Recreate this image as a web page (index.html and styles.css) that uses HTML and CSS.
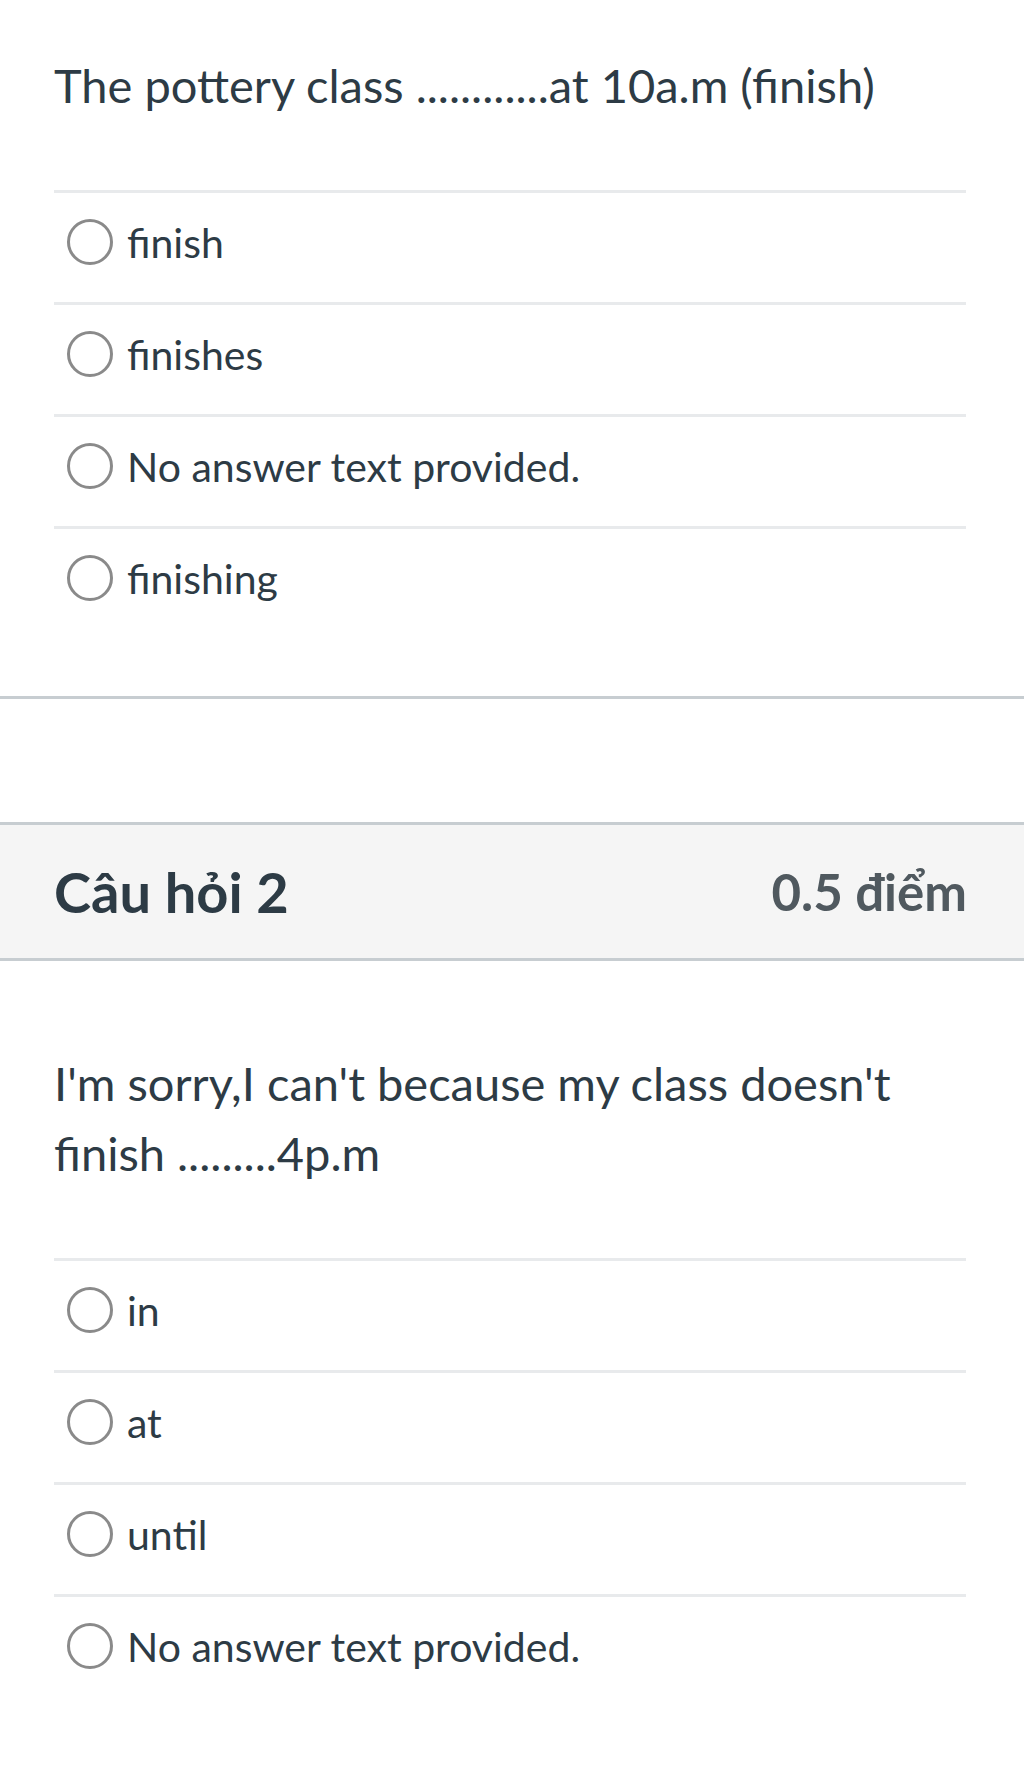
FILE: index.html
```html
<!DOCTYPE html>
<html lang="vi">
<head>
<meta charset="utf-8">
<title>Quiz</title>
<link rel="stylesheet" href="styles.css">
</head>
<body>
<div class="question">
  <div class="q-body">
    <div class="q-text">The pottery class ............at 10a.m (finish)</div>
    <div class="answers">
      <label class="answer"><span class="radio"></span><span class="a-text">finish</span></label>
      <label class="answer"><span class="radio"></span><span class="a-text">finishes</span></label>
      <label class="answer"><span class="radio"></span><span class="a-text">No answer text provided.</span></label>
      <label class="answer"><span class="radio"></span><span class="a-text">finishing</span></label>
    </div>
  </div>
</div>
<div class="question q2">
  <div class="q-header">
    <span class="q-name">Câu hỏi 2</span>
    <span class="q-points">0.5 điểm</span>
  </div>
  <div class="q-body">
    <div class="q-text">I'm sorry,I can't because my class doesn't finish .........4p.m</div>
    <div class="answers">
      <label class="answer"><span class="radio"></span><span class="a-text">in</span></label>
      <label class="answer"><span class="radio"></span><span class="a-text">at</span></label>
      <label class="answer"><span class="radio"></span><span class="a-text">until</span></label>
      <label class="answer"><span class="radio"></span><span class="a-text">No answer text provided.</span></label>
    </div>
  </div>
</div>
</body>
</html>
```
FILE: styles.css
```css
html, body {
  margin: 0;
  padding: 0;
  background: #ffffff;
}
body {
  font-family: Lato, "Noto Sans", "Liberation Sans", sans-serif;
  color: #2d3b45;
  width: 1024px;
  height: 1765px;
  overflow: hidden;
}
.question {
  border-bottom: 3px solid #c7cdd1;
}
.q2 {
  border-bottom: none;
  margin-top: 123px;
}
.q-body {
  padding: 50px 58px 58px 54px;
}
.q2 .q-body {
  padding-top: 87px;
}
.q-text {
  font-size: 47px;
  line-height: 70px;
  margin-bottom: 70px;
}
.answers {
  display: flex;
  flex-direction: column;
}
.answer {
  display: flex;
  align-items: center;
  box-sizing: border-box;
  height: 112px;
  border-top: 3px solid #e8eaec;
  padding-left: 13px;
  padding-bottom: 11px;
}
.radio {
  box-sizing: border-box;
  width: 46px;
  height: 46px;
  border: 3px solid #8a8a8a;
  border-radius: 50%;
  flex: none;
}
.a-text {
  font-size: 41px;
  margin-left: 14px;
}
.q-header {
  display: flex;
  justify-content: space-between;
  align-items: center;
  height: 133px;
  background: #f5f5f5;
  border-top: 3px solid #c7cdd1;
  border-bottom: 3px solid #c7cdd1;
  padding: 0 57px 0 54px;
  font-size: 56px;
  font-weight: 700;
}
.q-points {
  font-size: 51px;
  color: #50595f;
}
```
